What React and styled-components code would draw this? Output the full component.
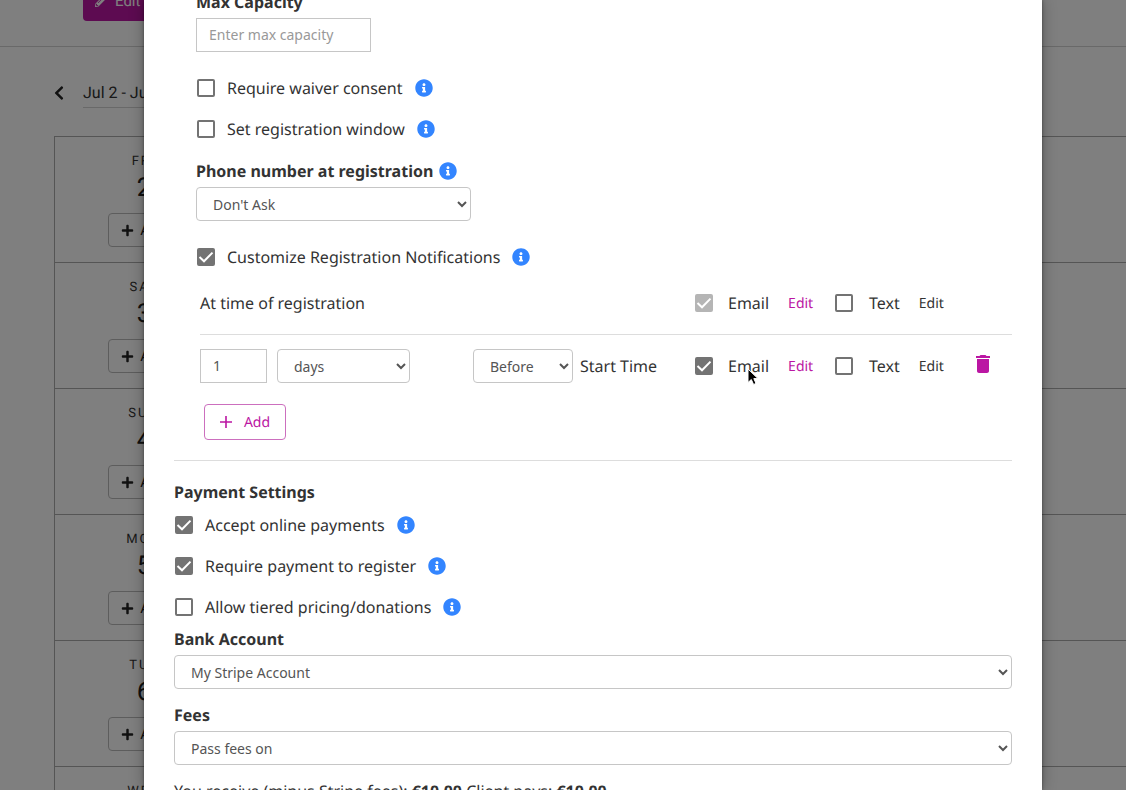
import React, { useState } from "react"
import styled, { createGlobalStyle, css } from "styled-components"
import { FaChevronLeft, FaInfoCircle, FaPencilAlt, FaPlus } from "react-icons/fa"
import { MdDelete } from "react-icons/md"

const purple = "#bb16a3"

const GlobalStyle = createGlobalStyle`
  * {
    box-sizing: border-box;
  }

  body {
    margin: 0;
    overflow: hidden;
    color: #333333;
    background-color: #ffffff;
    font-family: "Noto Sans", "Open Sans", sans-serif;
    font-size: 16px;
    line-height: 24px;
    text-rendering: geometricPrecision;
  }

  button,
  input,
  select {
    font-family: inherit;
  }

  button {
    text-rendering: inherit;
  }
`

/* Schedule behind the dialog */
const Page = styled.div`
  position: relative;
  height: 100vh;
  overflow: hidden;
  font-family: Roboto, Inter, sans-serif;
`

const PageHeader = styled.header`
  display: flex;
  align-items: flex-start;
  height: 47px;
  padding-left: 83px;
  border-bottom: 1px solid #d2d2d2;
`

const EditButton = styled.button`
  display: flex;
  align-items: center;
  gap: 8px;
  height: 40px;
  margin-top: -19px;
  padding: 0 12px;
  border: none;
  border-radius: 4px;
  background-color: ${purple};
  color: #ffffff;
  font-size: 15px;
`

const WeekNav = styled.nav`
  display: flex;
  align-items: center;
  gap: 16px;
  height: 89px;
  padding: 2px 0 0 51px;
`

const PrevButton = styled.button`
  display: flex;
  padding: 0;
  border: none;
  background: none;
  color: #222222;
  font-size: 16px;
`

const WeekRange = styled.span`
  height: 30px;
  line-height: 30px;
  border-bottom: 1px solid #d2d2d2;
`

const Week = styled.div`
  margin-left: 54px;
  border-top: 1px solid #aaaaaa;
  border-left: 1px solid #aaaaaa;
`

const Day = styled.section`
  display: flex;
  flex-direction: column;
  align-items: center;
  width: 100%;
  height: 126px;
  padding: 15px calc(100% - 178px) 0 0;
  border-bottom: 1px solid #aaaaaa;
`

const DayName = styled.div`
  font-size: 13px;
  line-height: 20px;
  letter-spacing: 2px;
  text-transform: uppercase;
`

const DayNumber = styled.div`
  margin-bottom: 9px;
  color: #222222;
  font-size: 26px;
  line-height: 32px;
`

const DayButton = styled.button`
  display: flex;
  align-items: center;
  justify-content: center;
  gap: 6px;
  flex-shrink: 0;
  width: 72px;
  height: 34px;
  padding: 0;
  border: 1px solid #bbbbbb;
  border-radius: 4px;
  background: none;
  color: #222222;
  font-size: 15px;
`

/* Dialog */
const Overlay = styled.div`
  position: absolute;
  inset: 0;
  display: flex;
  padding: 0 84px 0 144px;
  background-color: rgba(0, 0, 0, 0.5);
  font-family: "Noto Sans", "Open Sans", sans-serif;
`

const Dialog = styled.form`
  flex: 1;
  min-width: 0;
  overflow: hidden;
  padding: 0 30px;
  background-color: #ffffff;
  box-shadow: 0 0 3px rgba(0, 0, 0, 0.4), 0 0 14px rgba(0, 0, 0, 0.3);
`

/* The form is scrolled part way down, so its first label is cut */
const Scrolled = styled.div`
  margin-top: -10px;
`

const Indent = styled.div`
  padding-left: 22px;
`

const Field = styled.div`
  margin-bottom: ${({ gap }) => gap || 14}px;
`

const FieldLabel = styled.div`
  display: flex;
  align-items: center;
  gap: 6px;
  margin-bottom: 4px;
  font-weight: 700;
`

const control = css`
  height: 34px;
  width: ${({ $width }) => $width || "100%"};
  border: 1px solid #c6c6c6;
  background-color: #ffffff;
  color: #555555;
  font-size: 14px;
`

const TextInput = styled.input`
  ${control}
  padding: 5px 12px 7px;

  &::placeholder {
    color: #999999;
  }
`

const Select = styled.select`
  ${control}
  padding: 6px 12px;
  border-radius: 4px;
`

const CheckRow = styled.div`
  display: flex;
  align-items: center;
  gap: 12px;
  height: 41px;
  padding-left: 1px;
`

const CheckLabel = styled.label`
  display: flex;
  align-items: center;
  gap: ${({ $gap }) => $gap || 12}px;
`

const Box = styled.span`
  display: grid;
  flex-shrink: 0;
  width: 18px;
  height: 18px;

  input,
  svg {
    grid-area: 1 / 1;
    width: 18px;
    height: 18px;
    margin: 0;
  }

  input {
    appearance: none;
    border: 2px solid #737373;
    border-radius: 2px;
  }

  input:checked {
    background-color: #737373;
  }

  input:disabled {
    border-color: #b5b5b5;
    background-color: #b5b5b5;
  }

  svg {
    pointer-events: none;
    fill: none;
    stroke: #ffffff;
    stroke-width: 2;
  }
`

const InfoButton = styled.button`
  display: flex;
  padding: 0;
  border: none;
  background: none;
  color: #3385ff;
  font-size: 18px;
`

const Notifications = styled.div`
  padding-left: 26px;
`

const NotificationRow = styled.div`
  display: grid;
  grid-template-columns: 273px 1fr 140px 140px 38px;
  align-items: center;
  height: ${({ $tall }) => ($tall ? 62 : 52)}px;
`

const Inline = styled.div`
  display: flex;
  align-items: center;
  gap: ${({ gap }) => gap}px;
  white-space: nowrap;
`

const Channel = styled.div`
  position: relative;
  display: flex;
  align-items: center;
  gap: 19px;
  padding-left: 1px;
`

const EditLink = styled.button`
  padding: 0;
  border: none;
  background: none;
  color: ${({ disabled }) => (disabled ? "#333333" : purple)};
  font-size: 14px;
`

const TrashButton = styled.button`
  display: flex;
  justify-self: start;
  width: 18px;
  padding: 0 0 4px;
  border: none;
  background: none;
  color: ${purple};
  font-size: 24px;

  svg {
    flex-shrink: 0;
    margin: 0 -3px;
  }
`

const RowRule = styled.hr`
  height: 1px;
  margin: 5px 0 0;
  border: none;
  background-color: #dddddd;
`

const SectionRule = styled(RowRule)`
  margin: 20px 0 19px;
`

const AddButton = styled.button`
  display: flex;
  align-items: center;
  justify-content: center;
  gap: 12px;
  width: 82px;
  height: 36px;
  margin: 7px 0 0 4px;
  padding: 0;
  border: 1px solid #cc6fbe;
  border-radius: 4px;
  background-color: #ffffff;
  color: ${purple};
  font-size: 14px;
`

const SectionTitle = styled.div`
  font-weight: 700;
`

const Pointer = styled.svg`
  position: absolute;
  top: 14px;
  left: 53px;
  pointer-events: none;
`

const days = [
  { name: "Fri", number: 2 },
  { name: "Sat", number: 3 },
  { name: "Sun", number: 4 },
  { name: "Mon", number: 5 },
  { name: "Tue", number: 6 },
  { name: "Wed", number: 7 },
]

const CheckBox = ({ label, gap, defaultChecked = false, disabled }) => {
  const [checked, setChecked] = useState(defaultChecked)
  return (
    <CheckLabel $gap={gap}>
      <Box>
        <input
          type="checkbox"
          checked={checked}
          disabled={disabled}
          onChange={() => setChecked(!checked)}
        />
        {checked && (
          <svg viewBox="0 0 18 18">
            <path d="M2.5 9 L7 13.3 L15.5 4.6" />
          </svg>
        )}
      </Box>
      {label}
    </CheckLabel>
  )
}

const Info = () => (
  <InfoButton type="button" aria-label="More information">
    <FaInfoCircle />
  </InfoButton>
)

const Option = ({ label, checked }) => (
  <CheckRow>
    <CheckBox label={label} defaultChecked={checked} />
    <Info />
  </CheckRow>
)

const Schedule = () => (
  <>
    <PageHeader>
      <EditButton>
        <FaPencilAlt size={12} />
        Edit Schedule
      </EditButton>
    </PageHeader>
    <WeekNav>
      <PrevButton aria-label="Previous week">
        <FaChevronLeft />
      </PrevButton>
      <WeekRange>Jul 2 - Jul 8</WeekRange>
    </WeekNav>
    <Week>
      {days.map(({ name, number }) => (
        <Day key={name}>
          <DayName>{name}</DayName>
          <DayNumber>{number}</DayNumber>
          <DayButton>
            <FaPlus size={13} />
            Add
          </DayButton>
        </Day>
      ))}
    </Week>
  </>
)

const App = () => (
  <Page>
    <GlobalStyle />
    <Schedule />
    <Overlay>
      <Dialog onSubmit={e => e.preventDefault()}>
        <Scrolled>
          <Indent>
            <Field gap={15}>
              <FieldLabel as="label" htmlFor="capacity">
                Max Capacity
              </FieldLabel>
              <TextInput
                id="capacity"
                $width="175px"
                placeholder="Enter max capacity"
              />
            </Field>
            <Field gap={10}>
              <Option label="Require waiver consent" />
              <Option label="Set registration window" />
            </Field>
            <Field gap={15}>
              <FieldLabel>
                <label htmlFor="phone">Phone number at registration</label>
                <Info />
              </FieldLabel>
              <Select id="phone" $width="275px">
                <option>Don't Ask</option>
                <option>Optional</option>
                <option>Required</option>
              </Select>
            </Field>
            <Option label="Customize Registration Notifications" checked />
          </Indent>

          <Notifications>
            <NotificationRow>
              <div>At time of registration</div>
              <div />
              <Channel>
                <CheckBox label="Email" gap={15} defaultChecked disabled />
                <EditLink type="button">Edit</EditLink>
              </Channel>
              <Channel>
                <CheckBox label="Text" gap={16} />
                <EditLink type="button" disabled>
                  Edit
                </EditLink>
              </Channel>
            </NotificationRow>
            <RowRule />
            <NotificationRow $tall>
              <Inline gap={10}>
                <TextInput $width="67px" defaultValue="1" aria-label="Amount" />
                <Select $width="133px" aria-label="Unit">
                  <option>days</option>
                  <option>hours</option>
                </Select>
              </Inline>
              <Inline gap={7}>
                <Select id="relation" $width="100px">
                  <option>Before</option>
                  <option>After</option>
                </Select>
                <label htmlFor="relation">Start Time</label>
              </Inline>
              <Channel>
                <CheckBox label="Email" gap={15} defaultChecked />
                <EditLink type="button">Edit</EditLink>
                <Pointer width="14" height="18" viewBox="0 0 14 18">
                  <path
                    d="M1 1 V14.5 L4.3 11.5 L6.6 16.5 L9 15.4 L6.8 10.6 H11 Z"
                    fill="#000000"
                    stroke="#ffffff"
                  />
                </Pointer>
              </Channel>
              <Channel>
                <CheckBox label="Text" gap={16} />
                <EditLink type="button" disabled>
                  Edit
                </EditLink>
              </Channel>
              <TrashButton type="button" aria-label="Delete notification">
                <MdDelete />
              </TrashButton>
            </NotificationRow>
            <AddButton type="button">
              <svg width="12" height="12" viewBox="0 0 12 12">
                <path d="M6 0 V12 M0 6 H12" stroke="currentColor" strokeWidth="1.6" />
              </svg>
              Add
            </AddButton>
          </Notifications>

          <SectionRule />
          <SectionTitle>Payment Settings</SectionTitle>
          <Option label="Accept online payments" checked />
          <Option label="Require payment to register" checked />
          <Option label="Allow tiered pricing/donations" />
          <Field>
            <FieldLabel as="label" htmlFor="bank">
              Bank Account
            </FieldLabel>
            <Select id="bank">
              <option>My Stripe Account</option>
            </Select>
          </Field>
          <Field>
            <FieldLabel as="label" htmlFor="fees">
              Fees
            </FieldLabel>
            <Select id="fees">
              <option>Pass fees on</option>
              <option>Absorb fees</option>
            </Select>
          </Field>
          <div>
            You receive (minus Stripe fees): <b>€10.00</b> Client pays: <b>€10.00</b>
          </div>
        </Scrolled>
      </Dialog>
    </Overlay>
  </Page>
)

export default App
